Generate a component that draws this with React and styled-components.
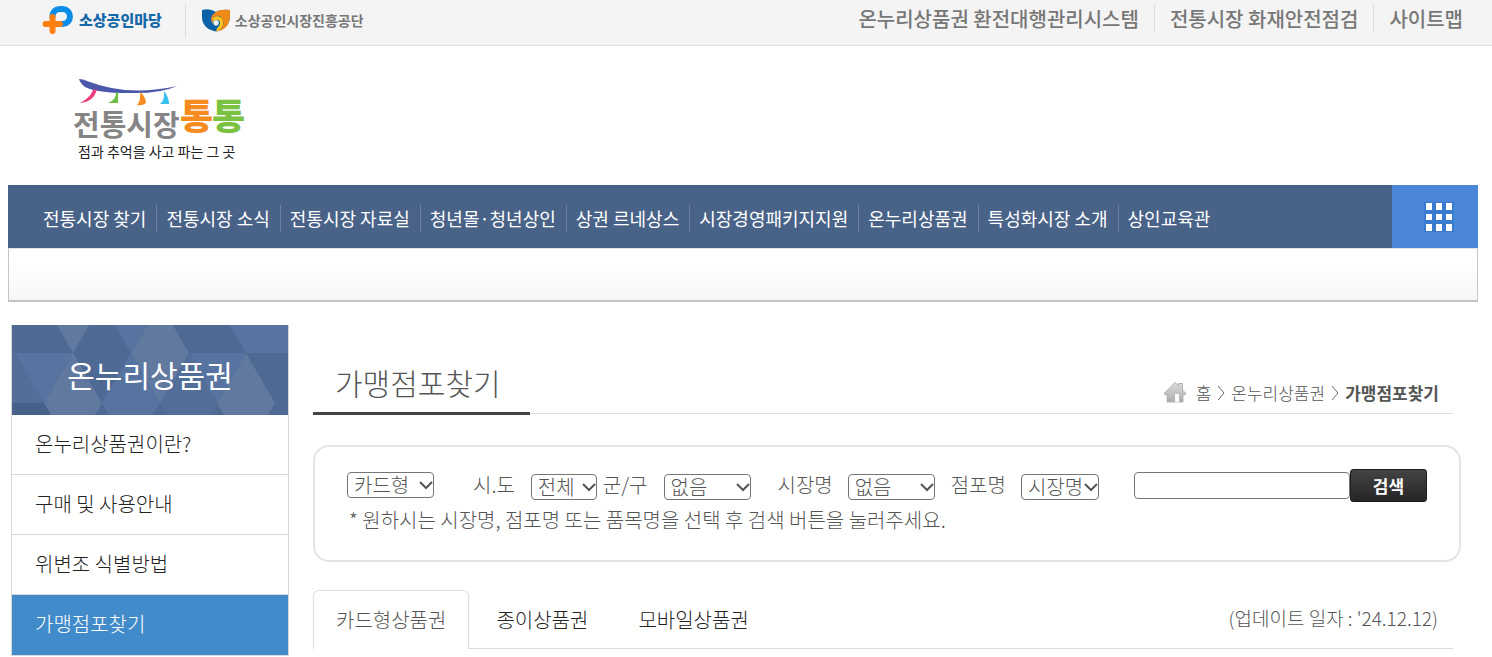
import React, { useState } from "react";
import styled, { createGlobalStyle } from "styled-components";

const navItems = [
  "전통시장 찾기",
  "전통시장 소식",
  "전통시장 자료실",
  "청년몰·청년상인",
  "상권 르네상스",
  "시장경영패키지지원",
  "온누리상품권",
  "특성화시장 소개",
  "상인교육관",
];

const topLinks = ["온누리상품권 환전대행관리시스템", "전통시장 화재안전점검", "사이트맵"];

const sideItems = ["온누리상품권이란?", "구매 및 사용안내", "위변조 식별방법", "가맹점포찾기"];

const tabs = ["카드형상품권", "종이상품권", "모바일상품권"];

function PlusLogo() {
  return (
    <svg width="32" height="28" viewBox="0 0 32 28" aria-hidden="true">
      <path d="M10.500 12 Q10 3 19 3 H20.500 A7.500 7.500 0 0 1 20.500 18 H18" fill="none" stroke="#0a8de8" strokeWidth="6" />
      <path d="M10.500 11 V25 M3.500 18 H18" fill="none" stroke="#ff7f11" strokeWidth="6" strokeLinecap="round" />
    </svg>
  );
}

function SwirlLogo() {
  return (
    <svg width="28" height="23" viewBox="0 0 28 23" aria-hidden="true">
      <path d="M0 1 Q8 -1 14 3 Q18 0 28 1 V8 Q27 20 14 22.500 Q1 20 0 9 Z" fill="#0b62a8" />
      <path d="M14 3 Q18 0 28 1 V8 Q27 20 15 22.500 Q23 18 21 12 Q19 6 14 7 Q9 9 11 15 Q6 8 14 3 Z" fill="#f08a16" />
      <path d="M11 15 Q9 8 15 7 Q21 8 21 13 Q22 19 15 22.500 Q13 21 17 17 Q20 12 15 10.500 Q11 11 11 15 Z" fill="#fdc51c" />
      <path d="M11.500 15 Q11 11 15 11 Q18 13 16 16 Q13 18 11.500 15 Z" fill="#f4f4f4" />
    </svg>
  );
}

function MarketLogo() {
  return (
    <svg width="180" height="90" viewBox="0 0 180 90" role="img" aria-label="전통시장 통통">
      <path d="M9 4 Q13 4 17 6 Q58 22 107 11 Q90 19 58 18 Q28 18 15 12 Q10 8 9 4 Z" fill="#4b57a8" />
      <path d="M27 14 Q24 27 10 28 Q20 23 23 15 Z" fill="#ee3f7f" />
      <path d="M48 17 V28 H38 Q46 25 46 18 Z" fill="#6dbe45" />
      <path d="M70 17 Q76 22 76 28 Q72 31 67 30 Q71 26 70 17 Z" fill="#f68b1f" />
      <path d="M94 16 Q99 22 99 29 H90 Q95 25 94 16 Z" fill="#38c0f0" />
      <LogoText x="3" y="61" $size={29} $weight={700} $color="#858585">전통시장</LogoText>
      <LogoText x="110" y="55" $size={36} $weight={900} $color="#f68b1f">통</LogoText>
      <LogoText x="142" y="55" $size={36} $weight={900} $color="#7cc242">통</LogoText>
      <LogoText x="8" y="82" $size={14} $weight={400} $color="#222">점과 추억을 사고 파는 그 곳</LogoText>
    </svg>
  );
}

// lattice of triangles behind the sidebar title
function TitlePattern() {
  return (
    <svg viewBox="0 0 276 90" preserveAspectRatio="xMidYMid slice" aria-hidden="true">
      <rect width="276" height="90" fill="#4d6994" />
      <path d="M32 -22 H90 L61 28 Z M148 -22 L177 28 L148 78 L119 28 Z M61 28 L90 78 L61 128 L32 78 Z M234 28 L263 78 L234 128 L205 78 Z" fill="#61799f" />
      <path d="M90 -22 H148 L119 28 Z M3 28 H61 L32 78 Z M205 -22 H263 L234 28 Z M263 -22 L292 28 H234 Z M177 28 H234 L205 78 Z M119 28 L148 78 L119 128 L90 78 Z" fill="#57739f" />
      <path d="M3 28 L32 78 H0 V28 Z M148 78 L177 28 L205 78 Z M148 78 H205 L177 128 Z" fill="#526e99" />
      <path d="M0 78 H32 L61 128 H0 Z" fill="#47618b" />
    </svg>
  );
}

function HomeIcon() {
  return (
    <svg width="22" height="21" viewBox="0 0 22 21" aria-hidden="true">
      <defs>
        <linearGradient id="house" x1="0" y1="0" x2="0" y2="1">
          <stop offset="0" stopColor="#dcdcdc" />
          <stop offset="1" stopColor="#adadad" />
        </linearGradient>
      </defs>
      <path d="M11 0.500 L14.500 4 V1.500 H18.500 V8 L21.500 11 V12.500 H19 V20 H3 V12.500 H0.500 V11 Z" fill="url(#house)" stroke="#b2b2b2" />
      <path d="M11 12 H15 V20 H11 Z" fill="#fafafa" />
    </svg>
  );
}

function Chevron() {
  return (
    <svg width="8" height="16" viewBox="0 0 8 16" aria-hidden="true">
      <path d="M1 1 L7 8 L1 15" fill="none" stroke="#666" />
    </svg>
  );
}

function SelectField({ label, options, width, gap, before }) {
  return (
    <Field $gap={gap} $before={before}>
      {label && <span>{label}</span>}
      <SelectBox $width={width} $drop={Boolean(label)}>
        <select aria-label={label || "상품권 종류"}>
          {options.map((option) => (
            <option key={option}>{option}</option>
          ))}
        </select>
        <svg width="14" height="9" viewBox="0 0 14 9" aria-hidden="true">
          <path d="M1 1 L7 7 L13 1" fill="none" stroke="#555" strokeWidth="2" />
        </svg>
      </SelectBox>
    </Field>
  );
}

function App() {
  const [keyword, setKeyword] = useState("");
  const [activeTab, setActiveTab] = useState(0);

  return (
    <>
      <GlobalStyle />
      <TopBar>
        <Partners>
          <Partner href="#" $color="#1769aa" $size={15} $weight={900}>
            <PlusLogo />
            소상공인마당
          </Partner>
          <Partner href="#" $color="#777" $size={14} $weight={700}>
            <SwirlLogo />
            소상공인시장진흥공단
          </Partner>
        </Partners>
        <TopLinks>
          {topLinks.map((text) => (
            <a href="#" key={text}>{text}</a>
          ))}
        </TopLinks>
      </TopBar>

      <Brand>
        <a href="#"><MarketLogo /></a>
      </Brand>

      <NavBox>
        <Nav>
          <NavList>
            {navItems.map((text) => (
              <li key={text}><a href="#">{text}</a></li>
            ))}
          </NavList>
          <MenuButton type="button" aria-label="전체메뉴">
            <svg width="30" height="30" viewBox="0 0 30 30" aria-hidden="true">
              <rect width="30" height="30" fill="#3a7bd0" />
              <path d="M2 1h6v7H2zM12 1h6v7h-6zM22 1h6v7h-6zM2 12h6v6H2zM12 12h6v6h-6zM22 12h6v6h-6zM2 22h6v7H2zM12 22h6v7h-6zM22 22h6v7h-6z" fill="#fff" />
            </svg>
          </MenuButton>
        </Nav>
        <SubNav />
      </NavBox>

      <Page>
        <Sidebar>
          <SideTitle>
            <TitlePattern />
            <span>온누리상품권</span>
          </SideTitle>
          <ul>
            {sideItems.map((text, i) => (
              <SideItem key={text} $active={i === 3}>
                <a href="#">{text}</a>
              </SideItem>
            ))}
          </ul>
        </Sidebar>

        <Main>
          <Heading>
            <h1>가맹점포찾기</h1>
            <Breadcrumb>
              <HomeIcon />
              <a href="#">홈</a>
              <Chevron />
              <a href="#">온누리상품권</a>
              <Chevron />
              <strong>가맹점포찾기</strong>
            </Breadcrumb>
          </Heading>

          <SearchBox onSubmit={(e) => e.preventDefault()}>
            <SearchRow>
              <SelectField options={["카드형", "종이", "모바일"]} width={87} />
              <SelectField label="시.도" options={["전체"]} width={66} gap={16} before={39} />
              <SelectField label="군/구" options={["없음"]} width={87} gap={16} before={6} />
              <SelectField label="시장명" options={["없음"]} width={87} gap={15} before={27} />
              <SelectField label="점포명" options={["시장명", "점포명"]} width={78} gap={15} before={16} />
              <KeywordInput
                type="text"
                aria-label="검색어"
                value={keyword}
                onChange={(e) => setKeyword(e.target.value)}
              />
              <SearchButton type="submit">검색</SearchButton>
            </SearchRow>
            <p>* 원하시는 시장명, 점포명 또는 품목명을 선택 후 검색 버튼을 눌러주세요.</p>
          </SearchBox>

          <TabBar>
            {tabs.map((text, i) => (
              <Tab type="button" key={text} $active={i === activeTab} onClick={() => setActiveTab(i)}>
                {text}
              </Tab>
            ))}
            <Updated>(업데이트 일자 : '24.12.12)</Updated>
          </TabBar>
        </Main>
      </Page>
    </>
  );
}

export default App;

const GlobalStyle = createGlobalStyle`
  * {
    box-sizing: border-box;
  }

  body {
    margin: 0;
    background: #fff;
    color: #555;
    font-family: "Noto Sans CJK KR", sans-serif;
    font-size: 20px;
    font-weight: 300;
    overflow-x: hidden;
  }

  a {
    color: inherit;
    text-decoration: none;
  }

  ul {
    list-style: none;
    margin: 0;
    padding: 0;
  }

  svg {
    display: block;
    flex: none;
  }

  input, select, button {
    font: inherit;
    color: inherit;
  }
`;

const TopBar = styled.header`
  display: flex;
  justify-content: space-between;
  height: 46px;
  padding: 4px 29px 0 42px;
  background: #f4f4f4;
  border-bottom: 1px solid #dcdcdc;
`;

const Partners = styled.div`
  display: flex;
  height: 34px;
  line-height: 30px;
`;

const Partner = styled.a`
  display: flex;
  align-items: center;
  column-gap: 5px;
  padding-bottom: 2px;
  color: ${(p) => p.$color};
  font-size: ${(p) => p.$size}px;
  font-weight: ${(p) => p.$weight};

  & + & {
    margin-left: 23px;
    padding-left: 16px;
    border-left: 1px solid #ddd;
  }
`;

const TopLinks = styled.nav`
  display: flex;
  height: 29px;
  line-height: 29px;
  font-weight: 500;
  color: #777;

  a + a {
    margin-left: 15px;
    padding-left: 15px;
    border-left: 1px solid #ddd;
  }
`;

const Brand = styled.div`
  display: flex;
  height: 139px;
  padding: 29px 70px 0;
`;

const LogoText = styled.text`
  font-size: ${(p) => p.$size}px;
  font-weight: ${(p) => p.$weight};
  fill: ${(p) => p.$color};
`;

const NavBox = styled.div`
  margin: 0 14px 0 8px;
`;

const Nav = styled.nav`
  display: flex;
  justify-content: space-between;
  height: 63px;
  background: #496388;
`;

const NavList = styled.ul`
  display: flex;
  align-items: center;
  padding: 4px 0 0 35px;
  color: #fff;
  font-size: 18px;
  font-weight: 400;
  line-height: 27px;
  white-space: nowrap;

  li + li {
    margin-left: 10px;
    padding-left: 9px;
    border-left: 1px solid #6c82a2;
  }
`;

const MenuButton = styled.button`
  display: flex;
  align-items: center;
  justify-content: center;
  width: 86px;
  padding: 0 0 0 8px;
  border: 0;
  background: #4a87d8;
  cursor: pointer;
`;

const SubNav = styled.div`
  height: 54px;
  border: 1px solid #c4c4c4;
  border-top-color: #dde3ea;
  border-bottom-width: 2px;
  background: linear-gradient(#fff 30%, #f6f6f6);
`;

const Page = styled.div`
  display: flex;
  align-items: flex-start;
  column-gap: 24px;
  padding: 23px 31px 0 11px;
`;

const Sidebar = styled.aside`
  flex: none;
  width: 278px;
  border: 1px solid #d7d7d7;
  border-width: 0 1px;
`;

const SideTitle = styled.h2`
  display: grid;
  height: 90px;
  margin: 0;
  color: #fff;
  font-size: 30px;
  font-weight: 400;

  > * {
    grid-area: 1 / 1;
    place-self: center;
  }

  svg {
    width: 100%;
    height: 90px;
  }

  span {
    z-index: 1;
    padding-top: 8px;
  }
`;

const SideItem = styled.li`
  height: 60px;
  border-bottom: 1px solid #d7d7d7;
  background: ${(p) => (p.$active ? "#428bca" : "#fff")};
  color: ${(p) => (p.$active ? "#fff" : "#222")};

  &:last-child {
    height: 61px;
  }

  a {
    display: block;
    padding-left: 23px;
    line-height: 58px;
  }
`;

const Main = styled.main`
  flex: 1;
  min-width: 0;
`;

const Heading = styled.div`
  display: flex;
  align-items: flex-start;
  justify-content: space-between;
  margin-right: 8px;
  height: 89px;
  box-shadow: inset 0 -1px #ddd;

  h1 {
    height: 90px;
    margin: 0;
    padding: 35px 29px 0 22px;
    border-bottom: 3px solid #444;
    font-size: 30px;
    font-weight: 300;
    line-height: 44px;
  }
`;

const Breadcrumb = styled.div`
  display: flex;
  align-items: center;
  column-gap: 6px;
  padding: 55px 14px 0 0;
  font-size: 17px;
  line-height: 25px;

  svg:first-child {
    margin-right: 4px;
  }

  strong {
    font-weight: 700;
  }
`;

const SearchBox = styled.form`
  height: 117px;
  margin-top: 31px;
  padding: 22px 32px 0;
  border: 2px solid #e4e4e4;
  border-radius: 16px;

  p {
    margin: 0 0 0 2px;
    line-height: 30px;
  }
`;

const SearchRow = styled.div`
  display: flex;
  align-items: flex-start;
  height: 36px;
  line-height: 31px;
`;

const Field = styled.label`
  display: flex;
  column-gap: ${(p) => p.$gap || 0}px;
  margin-left: ${(p) => p.$before || 0}px;
  white-space: nowrap;
`;

const SelectBox = styled.span`
  position: relative;
  width: ${(p) => p.$width}px;
  height: 26px;
  margin-top: ${(p) => (p.$drop ? 5 : 3)}px;

  select {
    display: block;
    appearance: none;
    width: 100%;
    height: 26px;
    padding: 0 0 0 6px;
    border: 1px solid #767676;
    border-radius: 4px;
    background: #fff;
    line-height: 24px;
  }

  svg {
    position: absolute;
    top: 9px;
    right: 1px;
    pointer-events: none;
  }
`;

const KeywordInput = styled.input`
  flex: 1;
  min-width: 0;
  height: 27px;
  margin: 3px 0 0 35px;
  border: 1px solid #767676;
  border-radius: 4px;
`;

const SearchButton = styled.button`
  width: 77px;
  height: 33px;
  padding: 0;
  border: 1px solid #1c1c1c;
  border-radius: 3px;
  background: linear-gradient(#444, #262626);
  color: #fff;
  font-size: 17px;
  font-weight: 700;
  line-height: 29px;
  cursor: pointer;
`;

const TabBar = styled.div`
  display: flex;
  margin: 28px 8px 0 0;
  height: 59px;
  box-shadow: inset 0 -1px #ddd;
`;

const Tab = styled.button`
  padding: 0 22px 2px;
  border: 1px solid ${(p) => (p.$active ? "#ddd" : "transparent")};
  border-bottom: 0;
  border-radius: 6px 6px 0 0;
  background: ${(p) => (p.$active ? "#fff" : "transparent")};
  color: ${(p) => (p.$active ? "#555" : "#222")};
  cursor: pointer;

  & + & {
    margin-left: 4px;
  }
`;

const Updated = styled.span`
  margin-left: auto;
  padding-right: 15px;
  font-size: 19px;
  line-height: 56px;
`;
